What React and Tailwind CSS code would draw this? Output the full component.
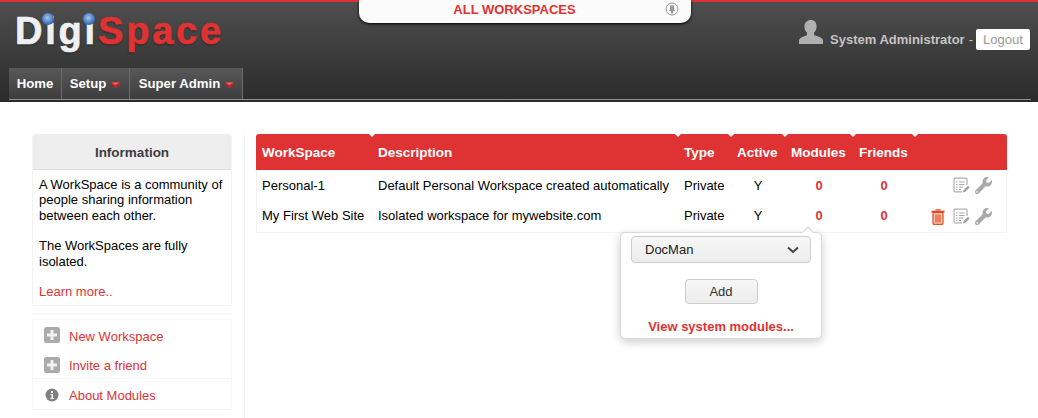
import React from "react";
import { FaWrench } from "react-icons/fa";

const Caret = () => (
  <svg width="11" height="7" viewBox="0 0 11 7" className="ml-[4px] mt-[3px]">
    <path d="M0 0.5h11L5.5 6.5z" fill="#c92222" />
    <path d="M1.5 0.5h8L5.5 3z" fill="#e86a6a" />
  </svg>
);

const Globe = ({ className }) => (
  <span className={"absolute h-[12px] w-[12px] rounded-full bg-[radial-gradient(circle_at_45%_40%,#a9c6ea,#3e74c0_60%,#2a4f8c)] " + className} />
);

const Plus = () => (
  <svg width="16" height="16" viewBox="0 0 16 16" className="mb-[3px] shrink-0">
    <rect width="16" height="16" rx="2.5" fill="#aaaaaa" />
    <path d="M6.500 3h3v3.500H13v3H9.500V13h-3V9.500H3v-3h3.500z" fill="#f2f2f2" />
  </svg>
);

const Info = () => (
  <svg width="16" height="16" viewBox="0 0 16 16" className="mb-[3px] shrink-0">
    <circle cx="8" cy="8" r="6.500" fill="#808080" />
    <rect x="7" y="4" width="2" height="2" fill="#fff" />
    <path d="M6.500 7H9v4h1v1H6.500v-1h1V8h-1z" fill="#fff" />
  </svg>
);

const Note = () => (
  <svg width="17" height="17" viewBox="0 0 17 17" fill="none" className="shrink-0">
    <path d="M14 8V2.200a1 1 0 0 0-1-1H2a1 1 0 0 0-1 1v11.600a1 1 0 0 0 1 1h7" stroke="#b0b0b0" strokeWidth="1.200" />
    <path d="M3 5h1.500M6 5h5.500M3 7.500h1.500M6 7.500h5.500M3 10h1.500M6 10h4M3 12.500h1.500M6 12.500h2" stroke="#a8a8a8" strokeWidth="1.100" />
    <path d="M10 15.500l.6-2.400 4.400-4.400 1.700 1.700-4.400 4.400z" fill="#a0a0a0" />
  </svg>
);

const Wrench = () => <FaWrench size={17} color="#aaaaaa" className="shrink-0" />;

const Trash = () => (
  <svg width="14" height="16" viewBox="0 0 14 16" fill="none" className="shrink-0">
    <path d="M5 1.500V.8h4v.7" stroke="#e04a1c" strokeWidth="1.200" />
    <path d="M.5 2.600h13" stroke="#e04a1c" strokeWidth="1.800" />
    <path d="M2 3.500h10v10.800a1 1 0 0 1-1 1H3a1 1 0 0 1-1-1z" fill="#f8c4b2" stroke="#e04a1c" strokeWidth="1.200" />
    <path d="M5 5.500v8M7 5.500v8M9 5.500v8" stroke="#e04a1c" strokeWidth="1.100" />
  </svg>
);

const Notch = () => (
  <span className="absolute right-[-3px] top-0 h-0 w-0 border-l-[3px] border-r-[3px] border-t-[3px] border-l-transparent border-r-transparent border-t-white" />
);

const Th = ({ children, className = "", notch = true }) => (
  <th className={"relative h-[36px] p-0 pt-[2px] align-middle text-[13.5px] font-bold text-white " + className}>
    {children}
    {notch && <Notch />}
  </th>
);

const rows = [
  { n: "Personal-1", d: "Default Personal Workspace created automatically", trash: false, pad: "" },
  { n: "My First Web Site", d: "Isolated workspace for mywebsite.com", trash: true, pad: "pb-[2px]" },
];

export default function App() {
  return (
    <div className="relative h-[418px] w-[1038px] overflow-hidden bg-white font-['Liberation_Sans',Arial,sans-serif] text-[13px] text-black">
      <header className="relative h-[102px] border-t-2 border-[#df3333] bg-[linear-gradient(#4e4e4e,#2b2b2b)]">
        <div className="flex h-[66px] items-start justify-between">
          <div className="relative ml-[15px] mt-[7px] flex text-[38px] font-bold leading-[44px] tracking-[2.800px] [-webkit-text-stroke:0.7px_currentColor] [text-shadow:0_1px_2px_rgba(0,0,0,0.5)]">
            <span className="text-[#f0f0f2]">Digi</span>
            <span className="text-[#df3333]">Space</span>
            <Globe className="left-[27px] top-[4px]" />
            <Globe className="left-[68px] top-[4px]" />
          </div>
          <div className="mr-[8px] mt-[17px] flex items-start">
            <svg width="26" height="26" viewBox="0 0 26 26">
              <path d="M13 1c3.600 0 5.600 2.700 5.600 6.200 0 2.700-1 5.200-2.600 6.600v2.200c3 1.300 8 2 9 5.200V25H1v-3.800c1-3.200 6-3.900 8-5.200v-2.200C7.400 12.400 6.400 9.900 6.400 7.200 6.400 3.700 9.400 1 13 1z" fill="#b0b0b0" />
            </svg>
            <span className="ml-[6px] mt-[11px] text-[13px] font-bold text-[#c4c4c4]">System Administrator</span>
            <span className="ml-[4px] mt-[11px] text-[#c4c4c4]">-</span>
            <span className="ml-[3px] mt-[10px] flex h-[21px] w-[54px] items-center justify-center rounded-[2px] bg-white text-[13px] text-[#999999]">Logout</span>
          </div>
        </div>
        <nav className="ml-[9px] mr-[7px] flex h-[32px] border-b border-[#8f8f8f] text-[13.200px] font-bold text-white">
          <a className="flex w-[53px] items-center justify-center border-r border-[#6b6b6b] bg-[linear-gradient(#585858,#3e3e3e)]">Home</a>
          <a className="flex w-[68px] items-center justify-center border-r border-[#6b6b6b] bg-[linear-gradient(#585858,#3e3e3e)]">Setup<Caret /></a>
          <a className="flex w-[113px] items-center justify-center border-r border-[#6b6b6b] bg-[linear-gradient(#585858,#3e3e3e)] pl-[2px]">Super Admin<Caret /></a>
        </nav>
      </header>

      <div className="absolute left-[359px] top-0 flex h-[23px] w-[332px] items-center justify-center rounded-b-[10px] bg-[#fbfbfb] pb-[3px] pr-[21px] text-[13px] font-bold text-[#df3333] shadow-[0_1px_3px_#000]">
        ALL WORKSPACES
        <svg width="14" height="14" viewBox="0 0 14 14" className="absolute right-[12px] top-[2px]">
          <circle cx="7" cy="7" r="6" fill="none" stroke="#999" strokeWidth="1" />
          <path d="M5 3.500h4v4l1 1.500H8v2.500H6V9H4l1-1.500z" fill="#999" />
        </svg>
      </div>

      <main className="flex pl-[32px] pt-[32px]">
        <aside className="mr-[11px] h-[284px] w-[213px] border-r border-[#f5f5f5] pr-[12px]">
          <section className="h-[172px] rounded-t-[3px] border border-t-0 border-[#f3f3f3]">
            <h3 className="flex h-[36px] items-center justify-center rounded-t-[3px] border-b border-[#dddddd] bg-[#eeeeee] pt-[4px] text-[13.5px] font-bold text-[#3d3d3d]">Information</h3>
            <div className="px-[6px] pt-[7px] leading-[15.400px]">
              <p>A WorkSpace is a community of people sharing information between each other.</p>
              <p className="mt-[15px]">The WorkSpaces are fully isolated.</p>
              <p className="mt-[15px] text-[#df3333]">Learn more..</p>
            </div>
          </section>
          <div className="mt-[7px] h-[2px] bg-[#f8f8f8]" />
          <ul className="mt-[4px] h-[91px] border border-[#f5f5f5] text-[#df3333]">
            <li className="flex h-[30px] items-center gap-[9px] pl-[11px] pt-[3px]"><Plus />New Workspace</li>
            <li className="flex h-[29px] items-center gap-[9px] border-b border-[#f5f5f5] pl-[11px] pt-[4px]"><Plus />Invite a friend</li>
            <li className="flex h-[30px] items-center gap-[9px] pl-[11px] pt-[4px]"><Info />About Modules</li>
          </ul>
        </aside>

        <div className="w-[751px]">
          <table className="w-full table-fixed border-separate border-spacing-0 overflow-hidden rounded-t-[3px] border-b border-[#f3f3f3]">
            <colgroup>
              <col className="w-[116px]" /><col className="w-[306px]" /><col className="w-[53px]" /><col className="w-[54px]" /><col className="w-[68px]" /><col className="w-[62px]" /><col className="w-[92px]" />
            </colgroup>
            <thead>
              <tr className="bg-[#df3333]">
                <Th className="pl-[6px] text-left">WorkSpace</Th>
                <Th className="pl-[6px] text-left">Description</Th>
                <Th className="pl-[6px] text-left">Type</Th>
                <Th className="pl-[6px] text-left">Active</Th>
                <Th className="pl-[6px] text-left">Modules</Th>
                <Th className="pl-[6px] text-left">Friends</Th>
                <Th notch={false}>{""}</Th>
              </tr>
            </thead>
            <tbody>
              {rows.map((r) => (
                <tr key={r.n} className="h-[31px]">
                  <td className={"border-l border-[#f3f3f3] pl-[5px] " + r.pad}>{r.n}</td>
                  <td className={"pl-[6px] " + r.pad}>{r.d}</td>
                  <td className={"pl-[6px] " + r.pad}>Private</td>
                  <td className={"text-center " + r.pad}>Y</td>
                  <td className={"text-center font-bold text-[#df3333] " + r.pad}>0</td>
                  <td className={"text-center font-bold text-[#df3333] " + r.pad}>0</td>
                  <td className="border-r border-[#f3f3f3] pr-[14px]">
                    <div className="flex items-center justify-end gap-[5px]">
                      {r.trash && <span className="mr-[3px] flex"><Trash /></span>}
                      <Note />
                      <Wrench />
                    </div>
                  </td>
                </tr>
              ))}
            </tbody>
          </table>
        </div>
      </main>

      <div className="absolute left-[620px] top-[232px] h-[107px] w-[202px] rounded-[5px] border border-[#d8d8d8] bg-white shadow-[0_3px_10px_rgba(0,0,0,0.2)]">
        <span className="absolute left-[183px] top-[-5px] h-[8px] w-[8px] rotate-45 border-l border-t border-[#d8d8d8] bg-white" />
        <div className="relative ml-[10px] mt-[3px] flex h-[27px] w-[180px] items-center justify-between rounded-[4px] border border-[#cccccc] bg-[linear-gradient(#f7f7f7,#ececec)] pl-[13px] pr-[11px] text-[13px] text-[#222222]">
          DocMan
          <svg width="12" height="8" viewBox="0 0 12 8" fill="none"><path d="M1 1.500l5 4.500 5-4.500" stroke="#444" strokeWidth="2" /></svg>
        </div>
        <div className="mt-[16px] flex justify-center">
          <button className="h-[25px] w-[73px] rounded-[4px] border border-[#cccccc] bg-[linear-gradient(#f7f7f7,#ececec)] text-[13px] text-[#333333]">Add</button>
        </div>
        <p className="mt-[13px] text-center text-[13px] font-bold text-[#df3333]">View system modules...</p>
      </div>
    </div>
  );
}
